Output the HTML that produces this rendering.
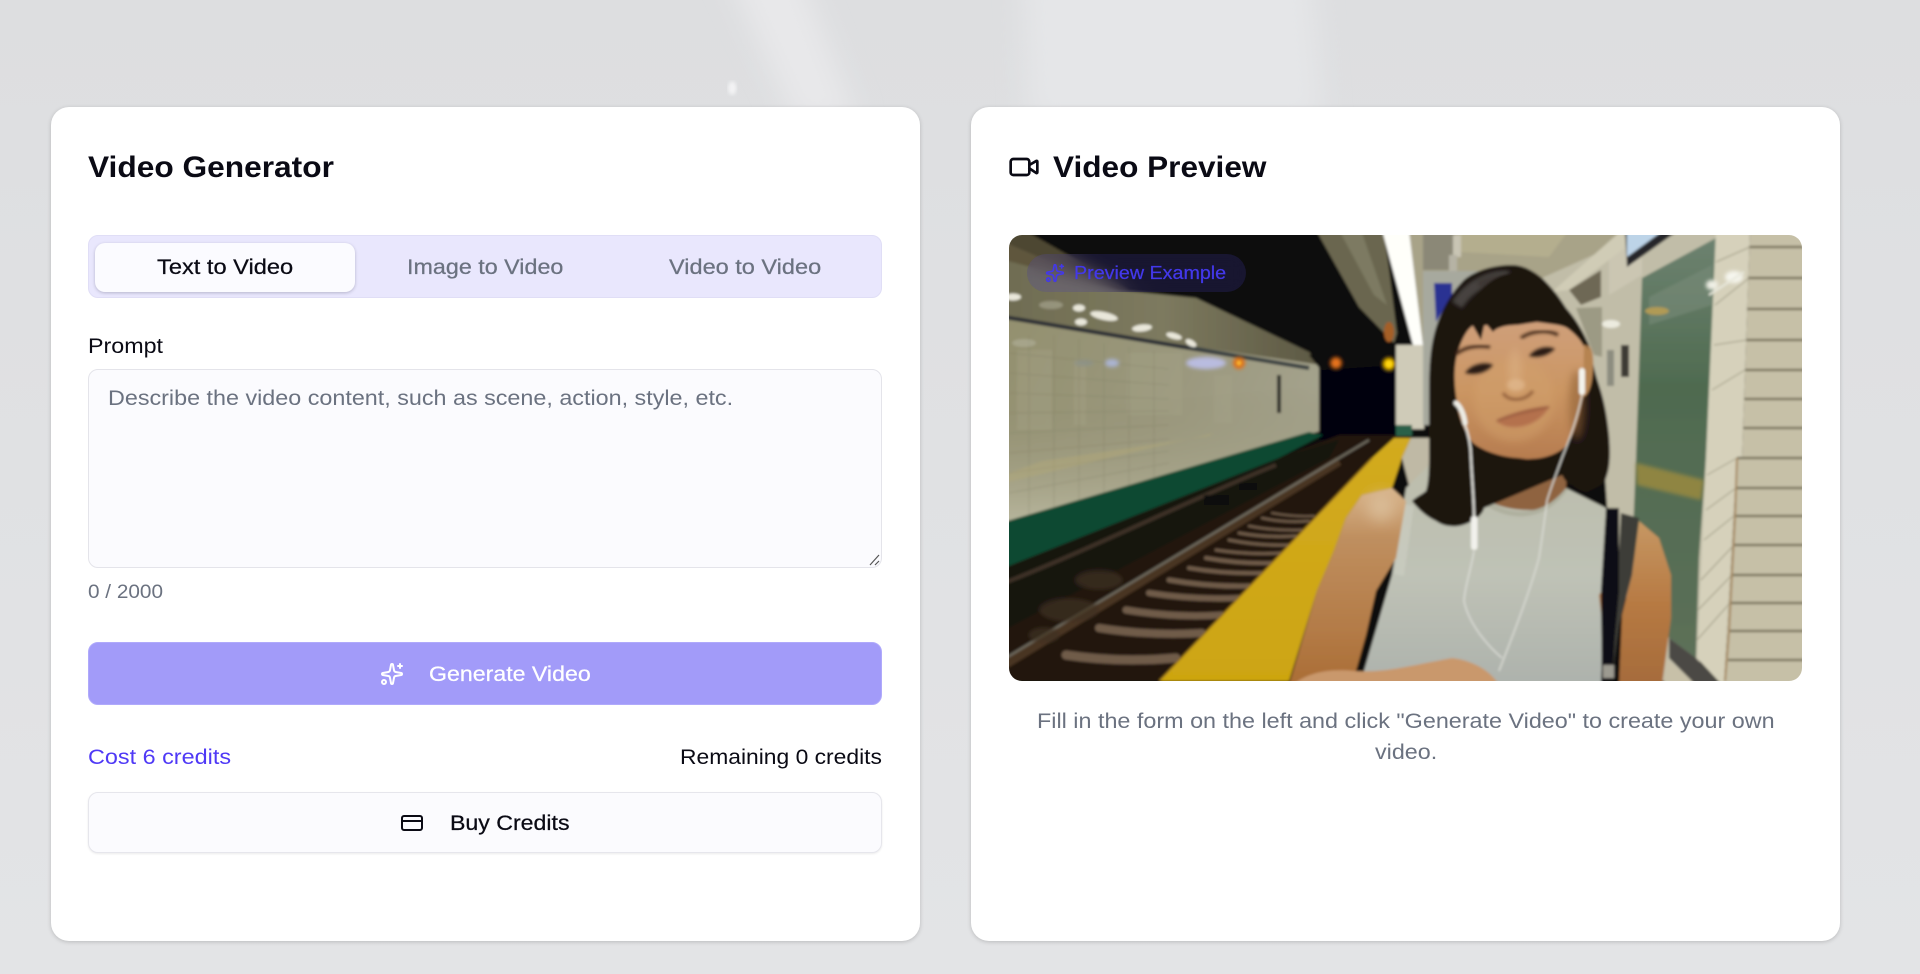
<!DOCTYPE html>
<html lang="en"><head><meta charset="utf-8"><title>Video Generator</title>
<style>
*{box-sizing:border-box}
html,body{margin:0;width:1920px;height:974px;overflow:hidden;background:#e0e1e3;font-family:"Liberation Sans",sans-serif}
.bg{position:absolute;left:0;top:0}
.a{position:absolute}
.t{position:absolute;white-space:nowrap;font-size:21px;line-height:30px;height:30px;color:#0a0a14;transform-origin:0 50%}
.m{-webkit-text-stroke:.25px currentColor}
.card{position:absolute;top:107px;width:869px;height:834px;background:#fff;border-radius:18px;box-shadow:0 1px 4px rgba(0,0,0,.18)}
.gray{color:#6b7280}
h2{margin:0;font-size:30px;font-weight:700;line-height:40px;height:40px;color:#0a0a14;transform-origin:0 50%;white-space:nowrap}
</style></head><body>
<svg class="bg" width="1920" height="974" viewBox="0 0 1568 795.4" preserveAspectRatio="none">
<defs><filter id="b1" x="-50%" y="-50%" width="200%" height="200%"><feGaussianBlur stdDeviation="11"/></filter><filter id="b2"><feGaussianBlur stdDeviation="1.5"/></filter>
<linearGradient id="pg" x1="0" y1="0" x2="0" y2="1"><stop offset="0" stop-color="#dddee0"/><stop offset=".3" stop-color="#dfe0e2"/><stop offset="1" stop-color="#e3e4e6"/></linearGradient></defs>
<rect width="1568" height="796" fill="url(#pg)"/>
<g filter="url(#b1)"><polygon points="590,-30 650,-30 700,100 650,100" fill="#e8e8ea"/><polygon points="835,-30 1070,-30 1080,100 840,100" fill="#e5e6e8"/></g>
<ellipse cx="598" cy="72" rx="3.5" ry="5.5" fill="#f3f3f4" filter="url(#b2)"/>
</svg>

<div class="card" style="left:51px"></div>
<div class="card" style="left:971px"></div>

<h2 class="a" style="left:88px;top:148px;transform:scaleX(1.056)">Video Generator</h2>

<div class="a" style="left:88px;top:235px;width:794px;height:63px;background:#e9e7fd;border:1px solid #e0def6;border-radius:10px"></div>
<div class="a" style="left:95px;top:243px;width:260px;height:49px;background:#fbfbff;border-radius:10px;box-shadow:0 1px 3px rgba(30,30,60,.25)"></div>
<div class="t m" style="left:157px;top:253px;transform:scaleX(1.125)">Text to Video</div>
<div class="t m gray" style="left:407px;top:253px;transform:scaleX(1.11)">Image to Video</div>
<div class="t m gray" style="left:669px;top:253px;transform:scaleX(1.12)">Video to Video</div>

<div class="t" style="left:88px;top:332px;transform:scaleX(1.108)">Prompt</div>
<div class="a" style="left:88px;top:369px;width:794px;height:199px;background:#fbfbfe;border:1px solid #e4e4ea;border-radius:10px"></div>
<div class="t gray" style="left:108px;top:384px;transform:scaleX(1.111)">Describe the video content, such as scene, action, style, etc.</div>
<svg class="a" style="left:868px;top:553px" width="13" height="14"><path d="M2 12 11 2M7 12l4-4" stroke="#555" stroke-width="1.2" fill="none"/></svg>
<div class="t gray" style="left:88px;top:578px;font-size:19px;transform:scaleX(1.092)">0 / 2000</div>

<div class="a" style="left:88px;top:642px;width:794px;height:63px;background:#a29bf9;border-radius:10px;border:1px solid #b0aafb"></div>
<svg class="a" style="left:380px;top:662px" width="24" height="24" viewBox="0 0 24 24" fill="none" stroke="#fff" stroke-width="2" stroke-linecap="round" stroke-linejoin="round"><path d="M11.017 2.814a1 1 0 0 1 1.966 0l1.051 5.558a2 2 0 0 0 1.594 1.594l5.558 1.051a1 1 0 0 1 0 1.966l-5.558 1.051a2 2 0 0 0-1.594 1.594l-1.051 5.558a1 1 0 0 1-1.966 0l-1.051-5.558a2 2 0 0 0-1.594-1.594l-5.558-1.051a1 1 0 0 1 0-1.966l5.558-1.051a2 2 0 0 0 1.594-1.594z"/><path d="M20 2v4M22 4h-4"/><circle cx="4" cy="20" r="2"/></svg>
<div class="t m" style="left:429px;top:660px;color:#fff;transform:scaleX(1.102)">Generate Video</div>

<div class="t" style="left:88px;top:743px;color:#4f39f6;transform:scaleX(1.114)">Cost 6 credits</div>
<div class="t" style="left:680px;top:743px;transform:scaleX(1.088)">Remaining 0 credits</div>

<div class="a" style="left:88px;top:792px;width:794px;height:61px;background:#fbfbfe;border:1px solid #e6e6ec;border-radius:10px;box-shadow:0 1px 2px rgba(0,0,0,.08)"></div>
<svg class="a" style="left:400px;top:811px" width="24" height="24" viewBox="0 0 24 24" fill="none" stroke="#0a0a14" stroke-width="2" stroke-linecap="round" stroke-linejoin="round"><rect x="2" y="5" width="20" height="14" rx="2"/><path d="M2 10h20"/></svg>
<div class="t m" style="left:450px;top:809px;transform:scaleX(1.101)">Buy Credits</div>

<svg class="a" style="left:1007.5px;top:151px" width="32" height="32" viewBox="0 0 24 24" fill="none" stroke="#0a0a14" stroke-width="2" stroke-linecap="round" stroke-linejoin="round"><path d="m16 13 5.223 3.482a.5.5 0 0 0 .777-.416V7.87a.5.5 0 0 0-.752-.432L16 10.5"/><rect x="2" y="6" width="14" height="12" rx="2"/></svg>
<h2 class="a" style="left:1053px;top:148px;transform:scaleX(1.052)">Video Preview</h2>

<svg class="a" style="left:1009px;top:235px;border-radius:13px" width="793" height="446" viewBox="0 0 793 446">
<defs>
<filter id="s" x="-5%" y="-5%" width="110%" height="110%"><feGaussianBlur stdDeviation="1.3"/></filter>
<filter id="f" x="-20%" y="-20%" width="140%" height="140%"><feGaussianBlur stdDeviation="1"/></filter>
<filter id="s2" x="-40%" y="-40%" width="180%" height="180%"><feGaussianBlur stdDeviation="4"/></filter>
<filter id="s3" x="-40%" y="-40%" width="180%" height="180%"><feGaussianBlur stdDeviation="7"/></filter>
<filter id="s1" x="-40%" y="-40%" width="180%" height="180%"><feGaussianBlur stdDeviation="1.6"/></filter>
<linearGradient id="wall" x1="0" y1="0" x2="1" y2=".3"><stop offset="0" stop-color="#93906f"/><stop offset=".6" stop-color="#9b987e"/><stop offset="1" stop-color="#a4a28c"/></linearGradient>
<linearGradient id="wallb" x1="0" y1="0" x2="0" y2="1"><stop offset="0" stop-color="#8e8b6d" stop-opacity="0"/><stop offset="1" stop-color="#b7b59c"/></linearGradient>
<linearGradient id="band" x1="0" y1="0" x2="1" y2="0"><stop offset="0" stop-color="#6f6c52"/><stop offset=".5" stop-color="#7d7a5f"/><stop offset="1" stop-color="#5c5843"/></linearGradient>
<linearGradient id="yel" x1="0" y1="0" x2="0" y2="1"><stop offset="0" stop-color="#d2aa20"/><stop offset="1" stop-color="#cda511"/></linearGradient>
<linearGradient id="arm" x1="0" y1="0" x2="0" y2="1"><stop offset="0" stop-color="#d8b48b"/><stop offset=".25" stop-color="#bf8f5f"/><stop offset=".7" stop-color="#b47c48"/><stop offset="1" stop-color="#aa6d35"/></linearGradient>
<linearGradient id="arm2" x1="0" y1="0" x2="0" y2="1"><stop offset="0" stop-color="#c69763"/><stop offset=".5" stop-color="#b77a43"/><stop offset="1" stop-color="#a56b3b"/></linearGradient>
<linearGradient id="face" x1="0" y1="0" x2="0" y2="1"><stop offset="0" stop-color="#cf9f7a"/><stop offset=".5" stop-color="#cb9663"/><stop offset="1" stop-color="#b67c4f"/></linearGradient>
<linearGradient id="shirt" x1="0" y1="0" x2="0" y2="1"><stop offset="0" stop-color="#bcbdac"/><stop offset=".5" stop-color="#bfc2b6"/><stop offset="1" stop-color="#adb2ac"/></linearGradient>
<linearGradient id="grn" x1="0" y1="0" x2="0" y2="1"><stop offset="0" stop-color="#6d8270"/><stop offset=".35" stop-color="#4f6b50"/><stop offset="1" stop-color="#5c6f58"/></linearGradient>
</defs>
<g filter="url(#s)">
<rect x="-5" y="-5" width="803" height="456" fill="#0b0a08"/>
<polygon points="-5,5 15,-5 120,55 -5,55" fill="#4e4733"/>
<polygon points="-5,20 110,55 187,63 300,117 312,130 -5,100" fill="url(#band)"/>
<polygon points="-5,7 60,35 110,55 -5,25" fill="#5f573e"/>
<polygon points="-5,84 312,130 312,196 213,223 -5,287" fill="url(#wall)"/>
<polygon points="-5,180 312,150 312,196 213,223 -5,287" fill="url(#wallb)"/>
<g fill="#a9a78b" opacity=".3"><rect x="118" y="118" width="55" height="62"/><rect x="205" y="140" width="18" height="48"/><rect x="8" y="115" width="35" height="80"/><rect x="65" y="125" width="12" height="65"/></g>
<g stroke="#6f6d55" stroke-width=".8" opacity=".3" fill="none"><path d="M0 118 160 134M0 138 160 150M0 158 160 164M0 178 160 176M0 198 160 190M0 218 160 204M0 238 160 216M0 258 160 228"/><path d="M20 100V280M45 100V275M70 104V268M95 108V262M120 112V255M145 116V248"/></g>
<polygon points="33,226 200,201 205,198 -5,248 -5,240" fill="#b2a978" opacity=".45"/>
<path d="M-5 82C60 92 180 112 300 133" stroke="#2c2e34" stroke-width="4" fill="none"/>
<path d="M180 112 300 133" stroke="#3d4444" stroke-width="3" fill="none"/>
<g fill="#e9e7da"><ellipse cx="4" cy="62" rx="8" ry="3.5"/><ellipse cx="70" cy="73" rx="6" ry="3.5"/><ellipse cx="72" cy="87" rx="6" ry="3.5"/><ellipse cx="95" cy="81" rx="14" ry="4" transform="rotate(12 95 81)"/><ellipse cx="133" cy="93" rx="10" ry="3.5" transform="rotate(-6 133 93)"/><ellipse cx="165" cy="101" rx="8" ry="3" transform="rotate(15 165 101)"/><ellipse cx="182" cy="108" rx="6" ry="3" transform="rotate(30 182 108)"/></g>
<g fill="#b8b7a3" opacity=".5"><ellipse cx="42" cy="70" rx="12" ry="4"/><ellipse cx="15" cy="108" rx="12" ry="4"/></g>
<rect x="268" y="140" width="4" height="38" fill="#2e2d2a"/>
<rect x="310" y="120" width="78" height="85" fill="#05050b"/>
<polygon points="300,120 388,104 388,130 312,135" fill="#0f0c08"/>
<polygon points="307,-5 375,-5 388,98 385,108 350,72" fill="#6a664f"/>
<polygon points="330,-5 352,-5 378,70 365,60" fill="#7d7a62"/>
<ellipse cx="380" cy="97" rx="5" ry="10" fill="#a55e28"/>
<g filter="url(#s1)"><ellipse cx="197" cy="128" rx="20" ry="6" fill="#b9bce0"/><ellipse cx="103" cy="128" rx="7" ry="4" fill="#aab4d2"/><ellipse cx="75" cy="128" rx="10" ry="3" fill="#8d9286"/><circle cx="230" cy="128" r="6" fill="#e07010"/><circle cx="327" cy="128" r="5.5" fill="#e8731a"/><circle cx="380" cy="129" r="6" fill="#ffc800"/></g>
<circle cx="380" cy="129" r="3.5" fill="#ffd60a"/><circle cx="230" cy="128" r="2.5" fill="#f8b030"/>
<polygon points="-5,446 -5,331 270,223 330,200 400,200 370,223 150,446" fill="#20160e"/>
<polygon points="-5,287 300,197 314,200 270,223 -5,333" fill="#114a33"/>
<polygon points="-5,333 270,223 330,205 320,223 -5,395" fill="#18140f"/>
<path d="M-5 348C80 315 180 265 267 230" stroke="#3d3328" stroke-width="4" fill="none"/>
<g fill="#0b0908"><rect x="195" y="260" width="25" height="10"/><rect x="230" y="248" width="18" height="7"/></g>
<path d="M-5 430 330 226" stroke="#4a3523" stroke-width="9" fill="none"/>
<path d="M-5 424 330 223 360 205" stroke="#6e6a5e" stroke-width="2.4" fill="none"/>
<g stroke="#6f5c49" fill="none" stroke-linecap="round"><path d="M57 420Q110 428 167 423" stroke-width="9"/><path d="M90 393Q140 401 193 398" stroke-width="8"/><path d="M117 375Q165 383 213 380" stroke-width="7"/><path d="M140 358Q185 365 230 363" stroke-width="6"/><path d="M160 345Q200 352 240 351" stroke-width="5"/><path d="M180 333Q215 339 253 338" stroke-width="4"/><path d="M197 323Q230 329 263 328" stroke-width="4"/><path d="M207 315Q240 320 273 318" stroke-width="3"/><path d="M220 305Q250 311 280 310" stroke-width="3"/><path d="M230 298Q258 303 287 301" stroke-width="3"/><path d="M240 291Q265 296 293 295" stroke-width="2.5"/><path d="M253 283Q275 288 300 286" stroke-width="2.5"/><path d="M263 278Q285 282 305 281" stroke-width="2"/></g>
<g fill="#3f3024" opacity=".7" filter="url(#s1)"><ellipse cx="60" cy="375" rx="30" ry="12"/><ellipse cx="90" cy="345" rx="24" ry="10"/><ellipse cx="35" cy="400" rx="16" ry="8"/></g>
<polygon points="385,203 402,203 393,223 383,253 353,260 337,283 325,316 308,356 280,446 150,446 363,223" fill="url(#yel)"/>
<path d="M150 446 363 223" stroke="#8f6a1a" stroke-width="1.5"/>
<rect x="387" y="110" width="28" height="84" fill="#cfcbb8"/>
<rect x="387" y="190" width="16" height="11" fill="#2c6049"/>
<polygon points="402,203 425,203 425,250 400,250 393,223" fill="#bfb9a5"/>
<polygon points="400,-5 650,-5 590,40 540,70 500,60 414,110" fill="#a8a388"/>
<polygon points="450,-5 560,-5 540,22 452,17" fill="#b4ae8e"/>
<rect x="414" y="-5" width="32" height="40" fill="#8b8877"/>
<rect x="444" y="0" width="8" height="22" fill="#c9c5b4"/>
<rect x="440" y="20" width="8" height="30" fill="#b6b3a4"/>
<polygon points="414,36 500,36 520,130 420,190 414,190" fill="#a7a99e"/>
<polygon points="373,-5 400,-5 414,110 404,110" fill="#fffffa"/>
<polygon points="425,48 443,48 443,60 427,87" fill="#2b3392"/>
<polygon points="533,43 640,-5 710,-5 700,223 690,446 640,446 600,300 590,150" fill="#c1bda8"/>
<polygon points="543,57 613,-5 640,-5 560,55" fill="#d0ccb6"/>
<polygon points="560,55 592,35 592,62 572,70" fill="#6e6854"/>
<polygon points="567,73 593,72 593,122 585,120" fill="#9c9a84"/>
<polygon points="600,25 633,-5 633,40 600,60" fill="#cfcbb6" opacity=".7"/>
<rect x="612" y="110" width="8" height="32" fill="#3c3b34"/><rect x="598" y="115" width="7" height="36" fill="#8d8d80"/>
<ellipse cx="602" cy="89" rx="9" ry="4" fill="#ecebdf"/>
<polygon points="616,-5 670,-5 618,32" fill="#25272c"/>
<polygon points="618,-5 655,-5 618,22" fill="#bdd4e8"/>
<polygon points="633,43 707,3 704,80 697,223 690,323 687,423 660,403 623,323 627,223" fill="url(#grn)"/>
<polygon points="640,62 703,30 703,70 640,90" fill="#7a8c7a" opacity=".55"/>
<ellipse cx="648" cy="76" rx="12" ry="4" fill="#b09a55"/>
<polygon points="627,228 695,245 692,265 628,250" fill="#8f8542" filter="url(#s1)"/>
<polygon points="660,403 687,423 712,450 687,450 660,423" fill="#4b4a45"/>
<polygon points="657,423 687,450 655,450" fill="#c7c0a8"/>
<polygon points="707,-5 741,-5 733,223 728,223 715,450 713,450 688,423 697,223" fill="#d6d1bb"/>
<polygon points="741,-5 800,-5 800,450 715,450 728,223 733,223" fill="#c6c0a7"/>
<g stroke="#6f6a55" stroke-width="2.2"><path d="M740 12H800M739 43H800M738 74H800M737 105H800M736 135H800M735 164H800M734 193H800M728 223H800M727 253H800M726 281H800M725 310H800M723 340H800M722 368H800M720 396H800M719 425H800"/></g>
<g stroke="#a09b84" stroke-width="1"><path d="M707 27 741 12M706 70 740 43M705 110 738 105M703 155 736 135M698 240 728 223M697 275 727 253M695 305 725 281M692 345 725 310M689 375 723 340M688 405 721 368"/></g>
<path d="M728 223 726 281 720 396 716 446" stroke="#a5875f" stroke-width="2" fill="none"/>
<ellipse cx="725" cy="42" rx="9" ry="6" fill="#f6f6ee" filter="url(#s1)"/><ellipse cx="703" cy="50" rx="6" ry="5" fill="#f0f0e6" filter="url(#s1)"/>
<path d="M700 60 735 37" stroke="#e8e8dc" stroke-width="2"/>
<polygon points="397,253 420,230 475,266 520,273 557,253 597,273 595,356 592,450 343,450 355,436 383,340" fill="url(#shirt)"/>
<path d="M400 270 390 340" stroke="#d0d2c6" stroke-width="10" opacity=".5" fill="none"/>
<path d="M475 266C500 285 535 285 557 253" stroke="#a9aa99" stroke-width="5" fill="none" opacity=".7"/>
<polygon points="383,253 353,260 337,283 325,316 308,356 280,450 343,450 357,400 367,356 387,323 397,266" fill="url(#arm)"/>
<ellipse cx="372" cy="272" rx="14" ry="14" fill="#dcc09c" opacity=".8" filter="url(#s3)"/>
<polygon points="630,286 650,303 662,340 662,383 653,450 610,450 613,380 623,340" fill="url(#arm2)"/>
<polygon points="590,360 597,350 600,395 594,395" fill="#a56c3a"/>
<polygon points="612,278 630,283 623,340 610,390 604,436" fill="#3e3c37"/>
<polygon points="597,273 610,273 610,356 603,436 593,450 592,356" fill="#0e0f15"/>
<rect x="594" y="430" width="11" height="13" fill="#9c9a90"/>
<path d="M284 450C295 440 315 433 345 436 375 438 400 431 443 423 460 425 480 433 490 450Z" fill="#c9986c"/>
<path d="M465 200 560 200 557 253C545 268 530 276 520 275 498 275 480 268 473 262Z" fill="#8f6340"/>
<path d="M503 30C485 30 467 35 455 45 440 60 430 80 425 100 420 120 420 143 420 170 420 190 420 210 420 223 420 240 419 250 417 256 412 260 407 262 403 266 410 275 418 282 427 286 435 292 450 294 463 286 470 282 474 278 475 273L553 240C556 246 560 250 563 250 570 256 578 258 580 256 590 252 596 248 597 243 600 235 602 225 600 200 598 180 595 165 590 150 585 135 582 120 580 110 572 92 565 82 557 73 548 58 540 50 533 43 522 34 512 30 503 30Z" fill="#1b1310"/>
<path d="M448 70C462 48 485 40 500 42" stroke="#5a5854" stroke-width="12" fill="none" opacity=".7" filter="url(#s1)"/>
<path d="M470 50C490 40 510 42 528 58" stroke="#3a322d" stroke-width="8" fill="none" opacity=".7" filter="url(#s1)"/>
<path d="M450 113C455 100 460 90 470 88 500 85 535 85 557 92 568 100 575 108 577 118 581 130 578 150 573 167 570 185 565 200 556 212 545 222 525 226 510 223 490 222 472 215 463 207 455 195 449 180 448 167 445 150 444 130 450 113Z" fill="url(#face)"/>
<ellipse cx="505" cy="165" rx="40" ry="42" fill="#d2a06c" opacity=".5" filter="url(#s2)"/>
<ellipse cx="568" cy="170" rx="8" ry="35" fill="#8f6036" opacity=".6" filter="url(#s2)"/>
<ellipse cx="506" cy="135" rx="6" ry="22" fill="#dfb78e" opacity=".45" filter="url(#s2)"/>
<ellipse cx="507" cy="150" rx="9" ry="6" fill="#e2b98f" opacity=".7" filter="url(#s1)"/>
<path d="M575 110C583 108 585 120 584 135 583 150 580 160 574 162Z" fill="#b68451"/>
<path d="M445 125C447 85 470 40 505 38 530 40 560 65 580 115 570 100 560 92 550 90L528 87 508 90C498 90 488 92 484 97L478 90 468 92 460 84C454 94 452 110 445 125Z" fill="#1d1411"/>
<path d="M460 84 472 105 478 78Z" fill="#1d1411"/>
<path d="M447 119C456 112 468 110 481 112" stroke="#4a2d1d" stroke-width="3.5" fill="none" filter="url(#f)"/>
<path d="M512 103C522 96 538 94 549 100" stroke="#4a2d1d" stroke-width="3.5" fill="none" filter="url(#f)"/>
<path d="M456 138C462 128 478 126 484 130 478 138 466 141 456 138Z" fill="#2c1b13" filter="url(#f)"/>
<path d="M520 121C526 112 540 110 546 114 540 120 530 124 520 121Z" fill="#2c1b13" filter="url(#f)"/>
<path d="M494 158C500 167 515 167 524 156" stroke="#94623e" stroke-width="3" fill="none" filter="url(#f)"/>
<path d="M488 186C505 177 525 172 540 172 535 182 522 192 505 192 497 192 492 190 488 186Z" fill="#b4714e" filter="url(#f)"/>
<path d="M488 186C505 178 525 175 540 172" stroke="#8a5038" stroke-width="1.6" fill="none" filter="url(#f)"/>
<path d="M455 187C460 200 462 212 462 223 463 245 465 265 465 283" stroke="#e9e9e3" stroke-width="2" fill="none"/>
<path d="M465 316C462 335 456 350 455 366 460 390 480 412 493 423" stroke="#dfe0da" stroke-width="1.3" fill="none"/>
<path d="M573 160C568 185 560 205 553 223 545 245 540 258 538 266 535 290 532 310 530 323 520 360 500 410 490 436" stroke="#dcddd6" stroke-width="1.4" fill="none"/>
<rect x="570" y="133" width="6" height="27" rx="3" fill="#f4f4ee"/>
<rect x="462" y="281" width="6.5" height="34" rx="3" fill="#f2f2ec"/>
<path d="M447 168C452 172 455 180 456 188" stroke="#ededE6" stroke-width="5" fill="none" stroke-linecap="round"/>
</g>
</svg>

<div class="a" style="left:1027px;top:254px;width:219px;height:38px;border-radius:19px;background:rgba(70,60,190,.2);-webkit-backdrop-filter:blur(8px);backdrop-filter:blur(8px)"></div>
<svg class="a" style="left:1045px;top:263px" width="20" height="20" viewBox="0 0 24 24" fill="none" stroke="#4338ea" stroke-width="2" stroke-linecap="round" stroke-linejoin="round"><path d="M11.017 2.814a1 1 0 0 1 1.966 0l1.051 5.558a2 2 0 0 0 1.594 1.594l5.558 1.051a1 1 0 0 1 0 1.966l-5.558 1.051a2 2 0 0 0-1.594 1.594l-1.051 5.558a1 1 0 0 1-1.966 0l-1.051-5.558a2 2 0 0 0-1.594-1.594l-5.558-1.051a1 1 0 0 1 0-1.966l5.558-1.051a2 2 0 0 0 1.594-1.594z"/><path d="M20 2v4M22 4h-4"/><circle cx="4" cy="20" r="2"/></svg>
<div class="t m" style="left:1074px;top:258px;font-size:18px;color:#4338ea;transform:scaleX(1.094)">Preview Example</div>

<div class="t gray" style="left:1037px;top:707px;transform:scaleX(1.1116)">Fill in the form on the left and click "Generate Video" to create your own</div>
<div class="t gray" style="left:1375px;top:738px;transform:scaleX(1.11)">video.</div>
</body></html>
